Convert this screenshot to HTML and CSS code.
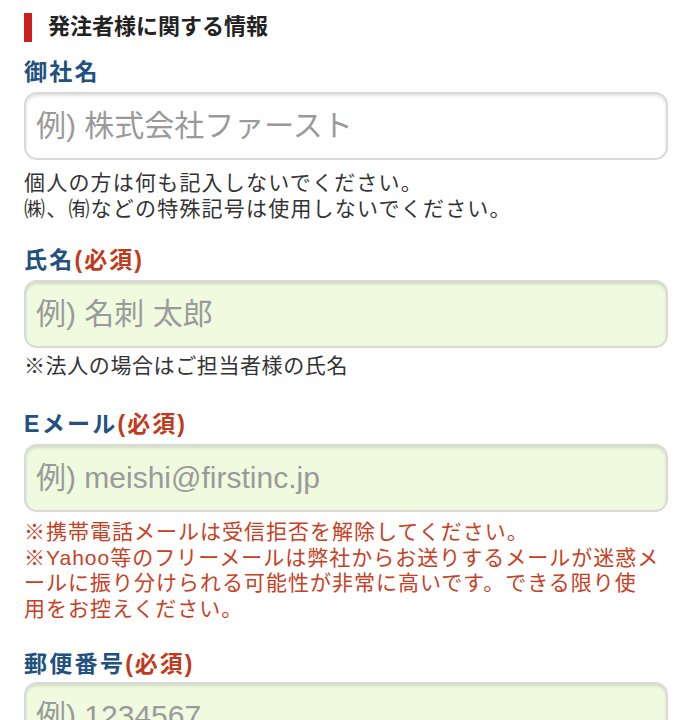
FILE: index.html
```html
<!DOCTYPE html>
<html lang="ja">
<head>
<meta charset="utf-8">
<link rel="stylesheet" href="styles.css">
</head>
<body>
<div class="form">
  <h2 class="section-title"><span class="bar"></span>発注者様に関する情報</h2>

  <div class="field">
    <label class="label">御社名</label>
    <input class="input" type="text" placeholder="例) 株式会社ファースト">
    <p class="hint hint-first">個人の方は何も記入しないでください。<br>㈱、㈲などの特殊記号は使用しないでください。</p>
  </div>

  <div class="field field-name">
    <label class="label">氏名<span class="req">(必須)</span></label>
    <input class="input input-req" type="text" placeholder="例) 名刺 太郎">
    <p class="hint hint-name">※法人の場合はご担当者様の氏名</p>
  </div>

  <div class="field field-mail">
    <label class="label">Eメール<span class="req">(必須)</span></label>
    <input class="input input-req" type="text" placeholder="例) meishi@firstinc.jp">
    <p class="hint hint-warn">※携帯電話メールは受信拒否を解除してください。<br>※Yahoo等のフリーメールは弊社からお送りするメールが迷惑メ<br>ールに振り分けられる可能性が非常に高いです。できる限り使<br>用をお控えください。</p>
  </div>

  <div class="field field-zip">
    <label class="label">郵便番号<span class="req">(必須)</span></label>
    <input class="input input-req" type="text" placeholder="例) 1234567">
  </div>
</div>
</body>
</html>
```

FILE: styles.css
```css
html, body {
  margin: 0;
  padding: 0;
  background: #ffffff;
}

body {
  font-family: "Liberation Sans", "Noto Sans CJK JP", sans-serif;
  color: #333333;
}

.form {
  padding: 12px 22px 0 24px;
}

.section-title {
  display: flex;
  align-items: center;
  gap: 16px;
  margin: 0;
  height: 30px;
  font-size: 22px;
  font-weight: bold;
  color: #222222;
  line-height: 30px;
}

.bar {
  display: block;
  width: 8px;
  height: 29px;
  background: #cc1f1f;
}

.field {
  display: flex;
  flex-direction: column;
}

.label {
  display: block;
  margin-top: 15px;
  font-size: 23px;
  line-height: 30px;
  font-weight: bold;
  letter-spacing: 2.3px;
  color: #22517f;
}

.req {
  color: #c23a1c;
  letter-spacing: 2px;
}

.input {
  box-sizing: border-box;
  width: 100%;
  height: 68px;
  margin-top: 5px;
  padding: 0 10px;
  border: 2px solid #d9d9d9;
  border-radius: 13px;
  background: #ffffff;
  box-shadow: inset 0 2px 3px rgba(0, 0, 0, 0.12);
  font-family: "Liberation Sans", "Noto Sans CJK JP", sans-serif;
  font-size: 30px;
  color: #333333;
  outline: none;
}

.input::placeholder {
  color: #9a9a9a;
}

.input-req {
  background: #effadf;
}

.hint {
  margin: 10px 0 0 0;
  font-size: 21px;
  line-height: 26px;
  letter-spacing: 1.2px;
  color: #333333;
}

.field-name .label {
  margin-top: 23px;
}

.hint-name {
  margin-top: 5px;
  letter-spacing: 0.6px;
}

.field-mail .label {
  margin-top: 30px;
}

.hint-warn {
  margin-top: 7px;
  color: #c8401f;
  line-height: 25.5px;
  letter-spacing: 1px;
  white-space: nowrap;
}

.field-zip .label {
  margin-top: 28px;
}

.field-zip .input {
  margin-top: 3px;
}
```
